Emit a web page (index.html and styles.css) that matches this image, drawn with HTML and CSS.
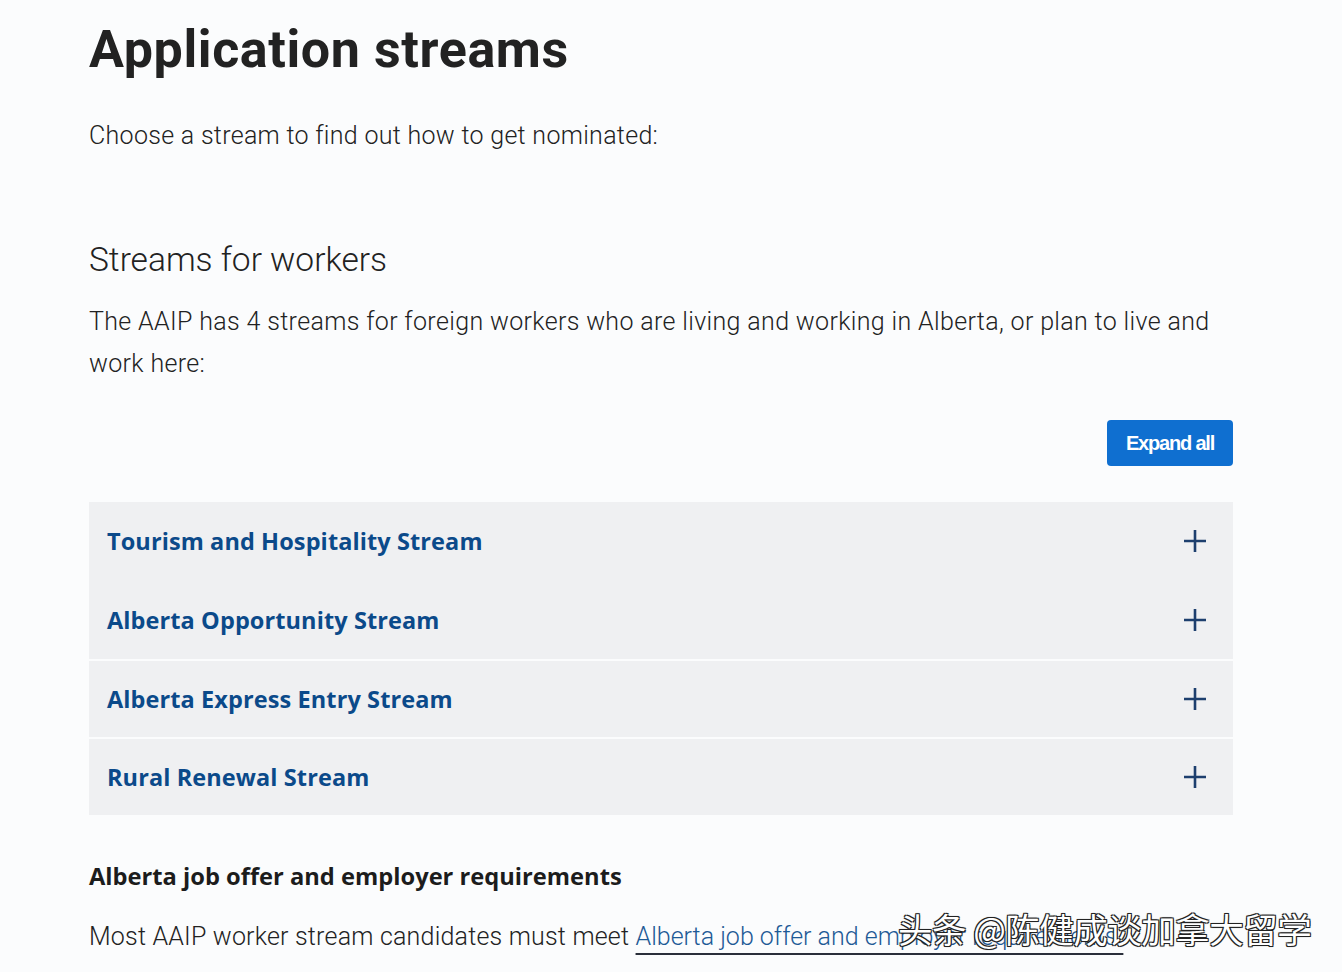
FILE: index.html
```html
<!DOCTYPE html>
<html lang="en">
<head>
<meta charset="utf-8">
<title>Application streams</title>
<link rel="stylesheet" href="styles.css">
</head>
<body>
<main class="page">
  <h1 class="title">Application streams</h1>
  <p class="lead">Choose a stream to find out how to get nominated:</p>

  <h2 class="section-title">Streams for workers</h2>
  <p class="body-text">The AAIP has 4 streams for foreign workers who are living and working in Alberta, or plan to live and work here:</p>

  <div class="actions">
    <button class="expand-btn" type="button">Expand all</button>
  </div>

  <div class="accordion">
    <div class="acc-item first">
      <span class="acc-title">Tourism and Hospitality Stream</span>
      <svg class="plus" viewBox="0 0 24 24" width="24" height="24"><path d="M12 1v22M1 12h22" stroke="#1d3f6e" stroke-width="2.6" fill="none"/></svg>
    </div>
    <div class="acc-item no-sep">
      <span class="acc-title">Alberta Opportunity Stream</span>
      <svg class="plus" viewBox="0 0 24 24" width="24" height="24"><path d="M12 1v22M1 12h22" stroke="#1d3f6e" stroke-width="2.6" fill="none"/></svg>
    </div>
    <div class="acc-item">
      <span class="acc-title">Alberta Express Entry Stream</span>
      <svg class="plus" viewBox="0 0 24 24" width="24" height="24"><path d="M12 1v22M1 12h22" stroke="#1d3f6e" stroke-width="2.6" fill="none"/></svg>
    </div>
    <div class="acc-item">
      <span class="acc-title">Rural Renewal Stream</span>
      <svg class="plus" viewBox="0 0 24 24" width="24" height="24"><path d="M12 1v22M1 12h22" stroke="#1d3f6e" stroke-width="2.6" fill="none"/></svg>
    </div>
  </div>

  <h3 class="sub-title">Alberta job offer and employer requirements</h3>
  <p class="body-text last">Most AAIP worker stream candidates must meet <a class="link" href="#">Alberta job offer and employer requirements.</a></p>
</main>
<div class="watermark">头条 @陈健成谈加拿大留学</div>
</body>
</html>
```

FILE: styles.css
```css
html, body {
  margin: 0;
  padding: 0;
  background: #fbfcfd;
}
body {
  font-family: Roboto, "Liberation Sans", Arial, sans-serif;
  color: #2b2b2b;
  position: relative;
  height: 972px;
  overflow: hidden;
}
.page {
  width: 1144px;
  padding: 20px 0 0 89px;
  display: flex;
  flex-direction: column;
}
.title {
  margin: 0;
  font-size: 52px;
  line-height: 60px;
  font-weight: 700;
  color: #222;
  letter-spacing: 0.6px;
}
.lead {
  margin: 38px 0 0;
  font-size: 25px;
  line-height: 36px;
  font-weight: 300;
  color: #222;
  letter-spacing: 0.3px;
}
.section-title {
  margin: 86px 0 0;
  font-size: 33.5px;
  line-height: 40px;
  font-weight: 300;
  color: #222;
}
.body-text {
  margin: 21px 0 0;
  font-size: 25px;
  line-height: 42px;
  font-weight: 300;
  color: #222;
  letter-spacing: 0.35px;
}
.actions {
  display: flex;
  justify-content: flex-end;
  margin-top: 35px;
}
.expand-btn {
  width: 126px;
  height: 46px;
  background: #0f6fd0;
  color: #fff;
  border: none;
  border-radius: 4px;
  font-family: "Liberation Sans", Arial, sans-serif;
  font-weight: 700;
  font-size: 20px;
  letter-spacing: -1.2px;
  padding: 0;
}
.accordion {
  margin-top: 36px;
  background: #eff0f2;
  display: flex;
  flex-direction: column;
}
.acc-item {
  height: 76px;
  display: flex;
  align-items: center;
  justify-content: space-between;
  padding: 0 26px 0 18px;
  border-top: 2px solid #fbfcfd;
}
.acc-item.first {
  border-top: none;
  height: 78px;
}
.acc-item.no-sep {
  border-top: none;
  height: 79px;
}
.acc-title {
  font-family: "Open Sans", "Liberation Sans", sans-serif;
  font-weight: 700;
  font-size: 23.5px;
  color: #0b4a8a;
  letter-spacing: 0.1px;
}
.plus {
  display: block;
}
.sub-title {
  margin: 45px 0 0;
  font-family: "Open Sans", "Liberation Sans", sans-serif;
  font-size: 23.7px;
  line-height: 32px;
  font-weight: 700;
  color: #1c1c1c;
}
.body-text.last {
  margin-top: 27px;
  line-height: 36px;
  letter-spacing: 0.2px;
}
.link {
  color: #1e5a96;
  text-decoration: underline;
  text-decoration-color: #2a2f3a;
  text-underline-offset: 8px;
  text-decoration-thickness: 2px;
  letter-spacing: 0px;
}
.watermark {
  position: absolute;
  left: 898px;
  top: 905px;
  font-family: "Noto Sans CJK SC", sans-serif;
  font-size: 34.5px;
  line-height: 46px;
  color: #fff;
  letter-spacing: -0.5px;
  text-shadow: 1px 1px 0 #222, -1px -1px 0 #222, 1px -1px 0 #222, -1px 1px 0 #222, 0 0 2px #000;
}
```
